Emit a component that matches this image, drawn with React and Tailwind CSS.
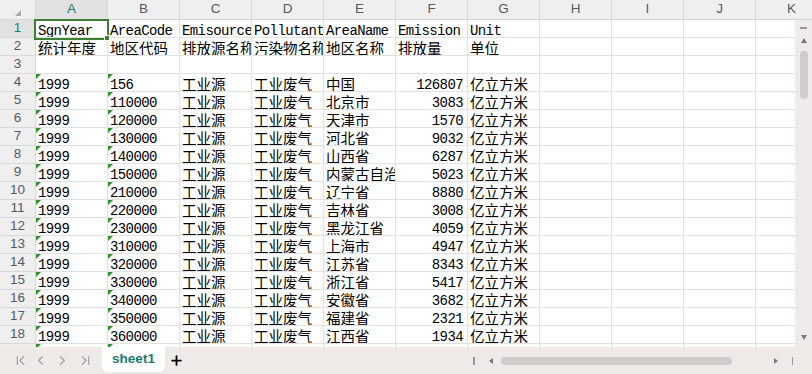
import React from "react";
import { ChevronFirst, ChevronLeft, ChevronRight, ChevronLast, Plus } from "lucide-react";

const COLS = ["A", "B", "C", "D", "E", "F", "G", "H", "I", "J", "K"];

const provinces = [
  ["156", "中国", "126807"],
  ["110000", "北京市", "3083"],
  ["120000", "天津市", "1570"],
  ["130000", "河北省", "9032"],
  ["140000", "山西省", "6287"],
  ["150000", "内蒙古自治区", "5023"],
  ["210000", "辽宁省", "8880"],
  ["220000", "吉林省", "3008"],
  ["230000", "黑龙江省", "4059"],
  ["310000", "上海市", "4947"],
  ["320000", "江苏省", "8343"],
  ["330000", "浙江省", "5417"],
  ["340000", "安徽省", "3682"],
  ["350000", "福建省", "2321"],
  ["360000", "江西省", "1934"],
];

const rows = [
  { cells: ["SgnYear", "AreaCode", "Emisource", "Pollutant", "AreaName", "Emission", "Unit"] },
  { cells: ["统计年度", "地区代码", "排放源名称", "污染物名称", "地区名称", "排放量", "单位"] },
  { cells: [] },
  ...provinces.map(([code, name, val]) => ({
    cells: ["1999", code, "工业源", "工业废气", name, val, "亿立方米"],
    data: true,
  })),
  { cells: [], data: true },
];

const isCJK = (s) => /[\u4e00-\u9fff]/.test(s);

function Cell({ value, right, flag }) {
  const cjk = value && isCJK(value);
  return (
    <div className="relative w-[72px] h-[18px] shrink-0 border-r border-b border-[#e2e2e2] overflow-hidden">
      {flag && (
        <div className="absolute left-0 top-0 w-0 h-0 border-t-[5px] border-r-[5px] border-t-[#2f8f2f] border-r-transparent" />
      )}
      {value && (
        <div
          className={
            (cjk
              ? "text-[14.5px] leading-[20px] font-['Noto_Sans_CJK_SC',sans-serif] "
              : "text-[14px] leading-[23px] tracking-[-0.6px] font-['Liberation_Mono',monospace] ") +
            (right ? "text-right pr-[4px] " : "pl-[2px] ") +
            "whitespace-nowrap text-black"
          }
        >
          {value}
        </div>
      )}
    </div>
  );
}

export default function App() {
  return (
    <div className="relative w-[812px] h-[374px] overflow-hidden flex flex-col bg-white font-['Liberation_Sans',sans-serif]">
      {/* column header */}
      <div className="flex h-[20px] shrink-0 bg-[#efefef] border-b border-[#d6d6d6]">
        <div className="relative w-[36px] shrink-0 border-r border-[#d9d9d9]">
          <div className="absolute left-[15px] top-[10px] w-0 h-0 border-b-[6px] border-l-[6px] border-b-[#a6a6a6] border-l-transparent" />
        </div>
        {COLS.map((c, i) => (
          <div
            key={c}
            className={
              "w-[72px] shrink-0 border-r border-[#dadada] flex items-center justify-center text-[13.5px] " +
              (i === 0 ? "bg-[#e2e2e2] text-[#1f7d74]" : "text-[#555a66]")
            }
          >
            {c}
          </div>
        ))}
      </div>

      {/* body */}
      <div className="flex flex-1 min-h-0">
        <div className="flex-1 overflow-hidden">
          {rows.map((r, ri) => (
            <div key={ri} className="flex h-[18px]">
              <div
                className={
                  "w-[36px] h-[18px] shrink-0 border-r border-b border-[#d9d9d9] flex items-center justify-center text-[13.5px] " +
                  (ri === 0 ? "bg-[#e1e1e1] text-[#1f7d74]" : "bg-[#efefef] text-[#555a66]")
                }
              >
                {ri + 1}
              </div>
              {COLS.map((c, ci) => (
                <Cell
                  key={c}
                  value={r.cells[ci]}
                  right={r.data && ci === 5}
                  flag={r.data && (ci === 0 || ci === 1)}
                />
              ))}
            </div>
          ))}
        </div>

        {/* vertical scrollbar */}
        <div className="w-[17px] shrink-0 bg-[#efebea] flex flex-col items-center">
          <div className="mt-[7px] w-[7px] h-[1.5px] bg-[#9a9a9a]" />
          <div className="mt-[9px] w-0 h-0 border-l-[3.5px] border-r-[3.5px] border-b-[5px] border-l-transparent border-r-transparent border-b-[#777]" />
          <div className="mt-[8px] w-[8px] h-[48px] rounded-full bg-[#d0cccb]" />
          <div className="flex-1" />
          <div className="mb-[7px] w-0 h-0 border-l-[3.5px] border-r-[3.5px] border-t-[5px] border-l-transparent border-r-transparent border-t-[#777]" />
        </div>
      </div>

      {/* tab bar */}
      <div className="h-[27px] shrink-0 bg-[#eeeae8] flex items-start">
        <div className="flex items-center h-[27px] pl-[13px] text-[#a3a3a3]">
          <ChevronFirst size={15} strokeWidth={2} />
          <ChevronLeft size={15} strokeWidth={2} className="ml-[5px]" />
          <ChevronRight size={15} strokeWidth={2} className="ml-[7px]" />
          <ChevronLast size={15} strokeWidth={2} className="ml-[8px]" />
        </div>
        <div className="ml-[9px] w-[63px] h-[25px] bg-white rounded-b-[6px] flex items-center justify-center text-[13.5px] font-bold text-[#1b7b70]">
          sheet1
        </div>
        <div className="ml-[4px] h-[27px] flex items-center text-black">
          <Plus size={15} strokeWidth={2.8} />
        </div>
        <div className="flex-1" />
        <div className="flex items-center h-[27px] mr-[19px]">
          <div className="w-[1.5px] h-[8px] bg-[#9a9a9a]" />
          <div className="ml-[14px] w-0 h-0 border-t-[3px] border-b-[3px] border-r-[4px] border-t-transparent border-b-transparent border-r-[#777]" />
          <div className="ml-[8px] w-[231px] h-[8px] rounded-full bg-[#d0cccb]" />
          <div className="ml-[42px] w-0 h-0 border-t-[3px] border-b-[3px] border-l-[4px] border-t-transparent border-b-transparent border-l-[#777]" />
          <div className="ml-[14px] w-[1.5px] h-[8px] bg-[#9a9a9a]" />
        </div>
      </div>

      {/* selection overlay */}
      <div className="absolute left-[34px] top-[19px] w-[75px] h-[21px] border-2 border-[#3d7f33] pointer-events-none" />
      <div className="absolute left-[104px] top-[35px] w-[6px] h-[6px] bg-[#3d7f33] border border-white pointer-events-none" />
    </div>
  );
}
